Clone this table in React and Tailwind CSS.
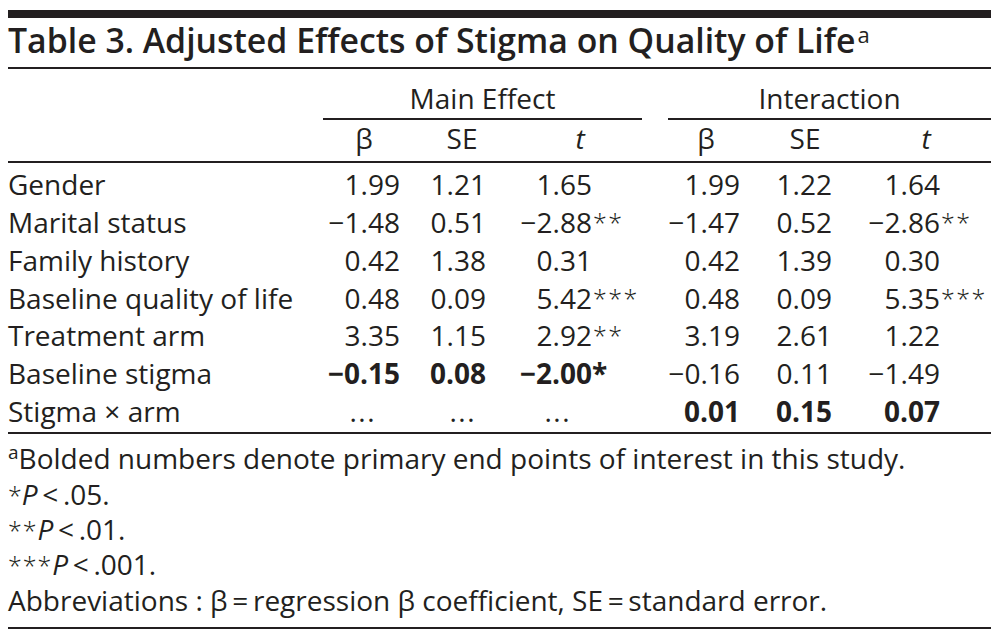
import React from "react";

const rows = [
  { label: "Gender", m: ["1.99", "1.21", "1.65", ""], i: ["1.99", "1.22", "1.64", ""] },
  { label: "Marital status", m: ["\u22121.48", "0.51", "\u22122.88", "**"], i: ["\u22121.47", "0.52", "\u22122.86", "**"] },
  { label: "Family history", m: ["0.42", "1.38", "0.31", ""], i: ["0.42", "1.39", "0.30", ""] },
  { label: "Baseline quality of life", m: ["0.48", "0.09", "5.42", "***"], i: ["0.48", "0.09", "5.35", "***"] },
  { label: "Treatment arm", m: ["3.35", "1.15", "2.92", "**"], i: ["3.19", "2.61", "1.22", ""] },
  { label: "Baseline stigma", m: ["\u22120.15", "0.08", "\u22122.00", "*"], i: ["\u22120.16", "0.11", "\u22121.49", ""], mBold: true },
  { label: "Stigma \u00d7 arm", m: null, i: ["0.01", "0.15", "0.07", ""], iBold: true },
];

function Group({ vals, bold, wide }) {
  const w = bold ? "font-bold" : "font-normal";
  return (
    <>
      <div className={`text-right ${w}`}>{vals[0]}</div>
      <div className={`text-right ${w}`}>{vals[1]}</div>
      <div className={`flex ${w}`}>
        <span className={wide ? "w-[108px] shrink-0 text-right" : "w-[106px] shrink-0 text-right"}>{vals[2]}</span>
        <span className={bold ? "font-bold" : "font-light text-[25px] tracking-[1.5px] pl-[1px]"}>{vals[3]}</span>
      </div>
    </>
  );
}

function Ellipses() {
  return (
    <>
      <div className="text-right pr-[24px] tracking-[1.5px]">...</div>
      <div className="text-right pr-[10px] tracking-[1.5px]">...</div>
      <div className="flex">
        <span className="w-[106px] shrink-0 text-right pr-[21px] tracking-[1.5px]">...</span>
      </div>
    </>
  );
}

export default function App() {
  return (
    <div className="w-[998px] h-[637px] bg-white overflow-hidden font-['Open_Sans',sans-serif] text-[#231f20]">
      <div className="pl-[8px] pr-[7px]">
        <div className="mt-[10px] h-[8px] bg-[#231f20]" />
        <div className="text-[33.8px] font-semibold leading-[44px] pb-[5px] border-b-2 border-[#231f20] whitespace-nowrap">
          Table 3. Adjusted Effects of Stigma on Quality of Life
          <span className="font-normal text-[22px] leading-none align-[10px] ml-[2px]">a</span>
        </div>

        <div className="grid grid-cols-[302px_90px_86px_164px_90px_92px_159px] text-[28px] leading-[37.7px]">
          <div />
          <div className="col-span-3 ml-[13px] mr-[8px] pt-[11px] border-b-2 border-[#231f20] text-center">
            Main Effect
          </div>
          <div className="col-span-3 ml-[18px] pt-[11px] border-b-2 border-[#231f20] text-center">
            Interaction
          </div>
        </div>

        <div className="grid grid-cols-[302px_90px_86px_164px_90px_92px_159px] text-[28px] leading-[37.7px] pt-[0px] pb-[4px] border-b-2 border-[#231f20]">
          <div />
          <div className="pl-[18px] text-center">β</div>
          <div className="pl-[38px] text-center">SE</div>
          <div className="pl-[24px] text-center italic">t</div>
          <div className="pl-[22px] text-center">β</div>
          <div className="pl-[38px] text-center">SE</div>
          <div className="pl-[29px] text-center italic">t</div>
        </div>

        <div className="grid grid-cols-[302px_90px_86px_164px_90px_92px_159px] text-[28px] leading-[37.7px] pt-[3px] pb-[1.5px] border-b-2 border-[#231f20] whitespace-nowrap">
          {rows.map((r) => (
            <React.Fragment key={r.label}>
              <div>{r.label}</div>
              {r.m ? <Group vals={r.m} bold={r.mBold} /> : <Ellipses />}
              <Group vals={r.i} bold={r.iBold} wide />
            </React.Fragment>
          ))}
        </div>

        <div className="text-[28px] leading-[35.3px] pt-[7.5px] pb-[9px] border-b-2 border-[#231f20] whitespace-nowrap">
          <div>
            <span className="text-[19px] leading-none align-[10px]">a</span>Bolded numbers denote primary end points of interest in this study.
          </div>
          <div>
            <span className="font-light text-[25px] leading-none">*</span><span className="italic">P</span>{"\u2009<\u2009"}.05.
          </div>
          <div>
            <span className="font-light text-[25px] leading-none tracking-[1px]">**</span><span className="italic">P</span>{"\u2009<\u2009"}.01.
          </div>
          <div>
            <span className="font-light text-[25px] leading-none tracking-[1px]">***</span><span className="italic">P</span>{"\u2009<\u2009"}.001.
          </div>
          <div>
            Abbreviations : β{"\u2009=\u2009"}regression β coefficient, SE{"\u2009=\u2009"}standard error.
          </div>
        </div>
      </div>
    </div>
  );
}
